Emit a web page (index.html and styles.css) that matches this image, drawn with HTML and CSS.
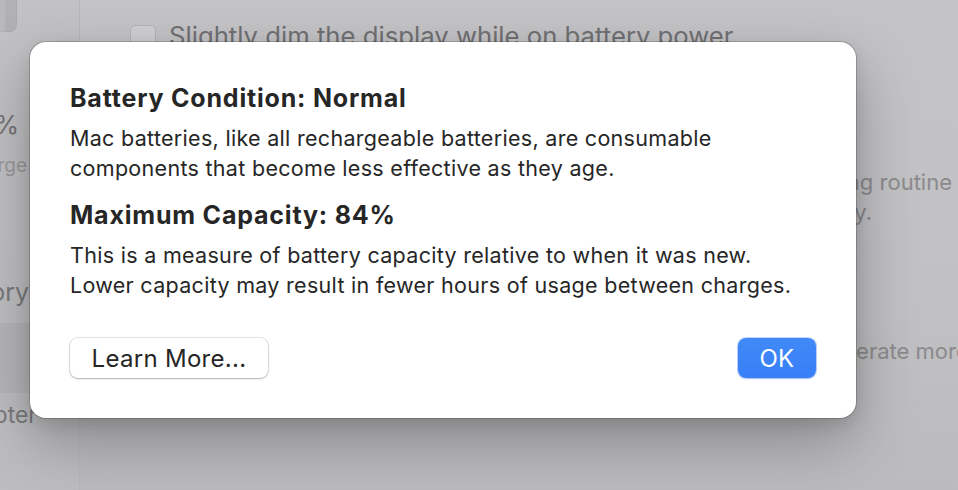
FILE: index.html
```html
<!DOCTYPE html>
<html lang="en">
  <head>
    <meta charset="UTF-8" />
    <title>Battery Health</title>
    <link rel="stylesheet" href="styles.css">
  </head>
  <body>
    <div class="window">
      <div class="sidebar">
        <div class="side-icon"></div>
        <div class="side-item big top">84%</div>
        <div class="side-item small">Charge</div>
        <div class="side-item big mid">Battery History</div>
        <div class="side-item row-sel"></div>
        <div class="side-item med">Power Adapter</div>
      </div>
      <div class="main">
        <div class="option">
          <span class="checkbox"></span>
          <span>Slightly dim the display while on battery power</span>
        </div>
        <div class="para first">
          <p class="line-a">Your Mac learns from your daily charging routine</p>
          <p class="line-b">to improve battery lifespan gradually.</p>
        </div>
        <div class="para second">
          <p>Your Mac may generate more power when plugged in</p>
        </div>
      </div>
    </div>

    <div class="dialog">
      <h2>Battery Condition: Normal</h2>
      <p>Mac batteries, like all rechargeable batteries, are consumable<br />components that become less effective as they age.</p>
      <h2>Maximum Capacity: 84%</h2>
      <p>This is a measure of battery capacity relative to when it was new.<br />Lower capacity may result in fewer hours of usage between charges.</p>
      <div class="actions">
        <button class="btn">Learn More...</button>
        <button class="btn primary">OK</button>
      </div>
    </div>
  </body>
</html>
```

FILE: styles.css
```css
* {
  padding: 0;
  margin: 0;
  box-sizing: border-box;
}
body {
  width: 958px;
  height: 490px;
  overflow: hidden;
  font-family: Inter, "Noto Sans", sans-serif;
  background: #c3c2c5;
  position: relative;
}
.window {
  display: flex;
  height: 100%;
}
.sidebar {
  width: 80px;
  flex-shrink: 0;
  overflow: hidden;
  background: linear-gradient(#c2c1c4, #bdbcbf);
  border-right: 1px solid #b8b7ba;
  display: flex;
  flex-direction: column;
}
.side-icon {
  width: 17px;
  height: 32px;
  border: 1px solid #a9a8ab;
  border-left: 5px solid #b9b8bb;
  border-top: none;
  border-radius: 0 0 8px 0;
  background: #b1b0b3;
}
.side-item {
  display: flex;
  justify-content: flex-end;
  white-space: nowrap;
  color: #7a797c;
}
.side-item.big {
  font-size: 25px;
}
.side-item.top {
  margin-top: 78px;
  padding-right: 60px;
  color: #737275;
}
.side-item.small {
  font-size: 19px;
  padding-right: 52px;
  color: #9a999c;
  margin-top: 14px;
}
.side-item.mid {
  margin-top: 100px;
  padding-right: 50px;
}
.row-sel {
  height: 70px;
  margin-top: 16px;
  background: #b6b5b8;
}
.side-item.med {
  font-size: 23px;
  padding-right: 42px;
  margin-top: 8px;
}
.main {
  flex: 1;
  overflow: hidden;
  padding: 20px 0 0 50px;
  color: #707073;
  background: linear-gradient(#c4c3c6, #c1c0c3 60%, #bbbabd);
  display: flex;
  flex-direction: column;
}
.option {
  display: flex;
  align-items: center;
  gap: 13px;
  font-size: 25.7px;
  white-space: nowrap;
}
.checkbox {
  width: 26px;
  height: 22px;
  flex-shrink: 0;
  border-radius: 5px;
  border: 1px solid #b3b2b5;
  background: #cfced1;
}
.para {
  white-space: nowrap;
  font-size: 22px;
  line-height: 30px;
  color: #8b8a8d;
}
.para.first {
  margin-top: 116px;
  display: flex;
  flex-direction: column;
  align-items: flex-end;
}
.line-a {
  margin-right: 6px;
}
.line-b {
  margin-right: 86px;
}
.para.second {
  margin-top: 109px;
  margin-left: 532px;
}
.dialog {
  position: absolute;
  left: 30px;
  top: 42px;
  width: 826px;
  height: 376px;
  background: #ffffff;
  border-radius: 16px;
  padding: 41px 40px 40px 40px;
  color: #262626;
  box-shadow: 0 0 0 1px rgba(0, 0, 0, 0.18), 0 24px 60px rgba(0, 0, 0, 0.28), 0 6px 16px rgba(0, 0, 0, 0.1);
  display: flex;
  flex-direction: column;
}
.dialog h2 {
  font-size: 25px;
  font-weight: 700;
  letter-spacing: 0.8px;
  line-height: 30px;
  margin-bottom: 10px;
}
.dialog p {
  font-size: 21.5px;
  letter-spacing: 0.3px;
  line-height: 30px;
  margin-bottom: 17px;
}
.actions {
  margin-top: auto;
  display: flex;
  justify-content: space-between;
  align-items: center;
}
.btn {
  font-family: inherit;
  font-size: 24px;
  letter-spacing: 0.3px;
  height: 40px;
  width: 198px;
  border-radius: 8px;
  border: none;
  background: #ffffff;
  color: #262626;
  box-shadow: 0 0 0 1px rgba(0, 0, 0, 0.1), 0 1px 2px rgba(0, 0, 0, 0.22);
}
.btn.primary {
  width: 78px;
  color: #ffffff;
  background: linear-gradient(#4289f8, #367ff6);
  box-shadow: 0 0 0 1px rgba(52, 120, 246, 0.3), 0 1px 2px rgba(40, 90, 200, 0.2);
}
```
